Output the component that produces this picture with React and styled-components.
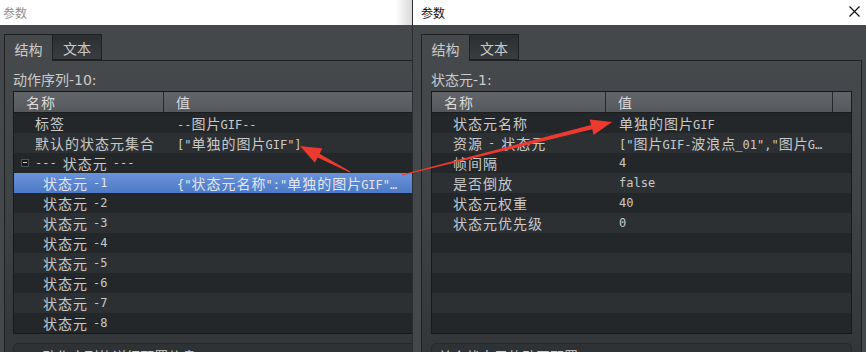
import React from 'react';
import styled, { createGlobalStyle } from 'styled-components';

const GlobalStyle = createGlobalStyle`
  html, body { margin: 0; padding: 0; background: #45484b; }
  body { font-family: "DejaVu Sans Mono", "Noto Sans CJK SC", monospace; }
`;

// CJK runs get their own span so they take the wider advance of the original
const T = ({ children }) =>
    String(children)
        .split(/([\u3400-\u9fff\u3000-\u303f\uff00-\uffef]+)/)
        .map((s, i) => (i % 2 ? <Cjk key={i}>{s}</Cjk> : s));

const leftRows = [
    { name: '标签', value: '--图片GIF--', indent: 21 },
    { name: '默认的状态元集合', value: '["单独的图片GIF"]', indent: 21 },
    { name: '---状态元---', value: '', indent: 7, group: true },
    { name: '状态元-1', value: '{"状态元名称":"单独的图片GIF"…', indent: 29, selected: true },
    { name: '状态元-2', value: '', indent: 29 },
    { name: '状态元-3', value: '', indent: 29 },
    { name: '状态元-4', value: '', indent: 29 },
    { name: '状态元-5', value: '', indent: 29 },
    { name: '状态元-6', value: '', indent: 29 },
    { name: '状态元-7', value: '', indent: 29 },
    { name: '状态元-8', value: '', indent: 29 },
];

const rightRows = [
    { name: '状态元名称', value: '单独的图片GIF', indent: 21 },
    { name: '资源-状态元', value: '["图片GIF-波浪点_01","图片G…', indent: 21 },
    { name: '帧间隔', value: '4', indent: 21 },
    { name: '是否倒放', value: 'false', indent: 21 },
    { name: '状态元权重', value: '40', indent: 21 },
    { name: '状态元优先级', value: '0', indent: 21 },
    {}, {}, {}, {}, {},
];

const arrow = (x1, y1, x2, y2, head = 20, hw = 8) => {
    const len = Math.hypot(x2 - x1, y2 - y1);
    const ux = (x2 - x1) / len;
    const uy = (y2 - y1) / len;
    const nx = -uy;
    const ny = ux;
    const bx = x2 - ux * head;
    const by = y2 - uy * head;
    const p = (x, y) => `${x.toFixed(1)},${y.toFixed(1)}`;
    return [
        p(x1 + nx * 0.6, y1 + ny * 0.6),
        p(bx + nx * 2.2, by + ny * 2.2),
        p(bx + nx * hw, by + ny * hw),
        p(x2, y2),
        p(bx - nx * hw, by - ny * hw),
        p(bx - nx * 2.2, by - ny * 2.2),
        p(x1 - nx * 0.6, y1 - ny * 0.6),
    ].join(' ');
};

const PropTable = ({ nameWidth, corner, rows }) => (
    <Table>
        <HeaderRow $name={nameWidth} $corner={corner}>
            <HeaderCell><T>名称</T></HeaderCell>
            <HeaderCell><T>值</T></HeaderCell>
            {corner && <HeaderCell />}
        </HeaderRow>
        {rows.map((r, i) => (
            <Row key={i} $name={nameWidth} $odd={i % 2 === 1} $selected={r.selected}>
                <NameCell $indent={r.indent || 0}>
                    {r.group && <Expander />}
                    {r.name && <T>{r.name}</T>}
                </NameCell>
                <ValueCell>{r.value && <T>{r.value}</T>}</ValueCell>
            </Row>
        ))}
    </Table>
);

const PanelWindow = ({ width, active, pad, paneWidth, panePad, label, nameWidth, corner, rows, footer }) => (
    <Window $w={width} $active={active}>
        <TitleBar $active={active}>
            <span>参数</span>
            {active && (
                <svg width="11" height="11" viewBox="0 0 11 11">
                    <path d="M0.5 0.5 L10.5 10.5 M10.5 0.5 L0.5 10.5" stroke="#111" strokeWidth="1.2" />
                </svg>
            )}
        </TitleBar>
        <Body $pad={pad}>
            <TabBar>
                <Tab $active>结构</Tab>
                <Tab>文本</Tab>
            </TabBar>
            <Pane $w={paneWidth} $pad={panePad}>
                <Label>{label}</Label>
                <PropTable nameWidth={nameWidth} corner={corner} rows={rows} />
                <Footer>{footer}</Footer>
            </Pane>
        </Body>
    </Window>
);

const App = () => (
    <Page>
        <GlobalStyle />
        <PanelWindow
            width={412}
            pad={4}
            paneWidth={470}
            panePad={8}
            label="动作序列-10:"
            nameWidth={150}
            rows={leftRows}
            footer="???动作序列的详细配置信息"
        />
        <PanelWindow
            width={454}
            active
            pad={8}
            paneWidth={441}
            panePad={9}
            label="状态元-1:"
            nameWidth={174}
            corner
            rows={rightRows}
            footer="单个状态元的动画配置"
        />
        <Overlay width="866" height="352" viewBox="0 0 866 352">
            <polygon points={arrow(350, 172, 300, 146, 21, 8)} fill="#ee3a2e" />
            <polygon points={arrow(402, 175, 612, 122, 21, 8)} fill="#ee3a2e" />
        </Overlay>
    </Page>
);

export default App;

const Page = styled.div`
position: relative;
display: flex;
width: 866px;
height: 352px;
overflow: hidden;
background: #45484b;
`;
const Overlay = styled.svg`
position: absolute;
left: 0;
top: 0;
pointer-events: none;
`;
const Window = styled.section`
flex: none;
display: flex;
flex-direction: column;
width: ${(p) => p.$w}px;
height: 352px;
overflow: hidden;
box-sizing: border-box;
border-left: ${(p) => (p.$active ? '1px solid #2b2e30' : 'none')};
`;
const TitleBar = styled.div`
flex: none;
height: 25px;
display: flex;
align-items: center;
justify-content: space-between;
padding: 0 ${(p) => (p.$active ? '6px 0 8px' : '0 0 3px')};
box-sizing: border-box;
background: ${(p) => (p.$active ? '#fff' : 'linear-gradient(to right, #fff 0, #fff calc(100% - 16px), #d8d8d8 100%)')};
color: ${(p) => (p.$active ? '#111' : '#8e8e8e')};
font-family: "Noto Sans CJK SC", sans-serif;
font-size: 12px;
svg { margin-top: -2px; }
`;
const Body = styled.div`
flex: 1;
display: flex;
flex-direction: column;
padding: 9px 0 0 ${(p) => p.$pad}px;
background: #45484b;
overflow: hidden;
`;
const TabBar = styled.div`
display: flex;
height: 26px;
position: relative;
z-index: 1;
`;
const Tab = styled.div`
width: 47px;
height: ${(p) => (p.$active ? 27 : 26)}px;
box-sizing: border-box;
display: flex;
align-items: center;
justify-content: center;
padding-top: 1px;
border: 1px solid #1e2022;
border-bottom: ${(p) => (p.$active ? 'none' : '1px solid #1e2022')};
margin-left: ${(p) => (p.$active ? 0 : -1)}px;
background: ${(p) => (p.$active ? '#46494c' : 'linear-gradient(#2c2f32, #3a3d40)')};
color: #cbcbcb;
font-family: "Noto Sans CJK SC", sans-serif;
font-size: 14px;
&:first-child { width: 49px; }
&:last-child { width: 50px; }
`;
const Pane = styled.div`
flex: 1;
width: ${(p) => p.$w}px;
box-sizing: border-box;
border: 1px solid #1e2022;
border-bottom: none;
padding: 0 ${(p) => p.$pad}px;
background: linear-gradient(#46494c 0, #404346 140px, #35383b 270px, #313437 100%);
`;
const Label = styled.div`
margin-top: 9px;
height: 21px;
line-height: 21px;
color: #cbcbcb;
font-family: "DejaVu Sans", "Noto Sans CJK SC", sans-serif;
font-size: 14px;
`;
const Table = styled.div`
border: 1px solid #18191b;
background: #232628;
`;
const columns = (p) => `${p.$name}px 1fr${p.$corner ? ' 18px' : ''}`;
const HeaderRow = styled.div`
display: grid;
grid-template-columns: ${columns};
height: 20px;
border-bottom: 1px solid #1a1c1e;
background: linear-gradient(#62656a, #56595c);
`;
const HeaderCell = styled.div`
display: flex;
align-items: center;
padding-left: 12px;
border-right: 1px solid #26282a;
color: #dadada;
font-size: 12px;
&:last-child { border-right: none; }
`;
const Row = styled.div`
display: grid;
grid-template-columns: ${columns};
height: 20px;
align-items: center;
white-space: nowrap;
font-size: 12px;
color: ${(p) => (p.$selected ? '#e2e6ee' : '#c9c9c9')};
background: ${(p) =>
    p.$selected ? 'linear-gradient(#6a93da, #4d79c6)' : p.$odd ? '#2d3033' : '#24272a'};
`;
const NameCell = styled.div`
display: flex;
align-items: center;
gap: 6px;
padding-left: ${(p) => p.$indent}px;
overflow: hidden;
`;
const ValueCell = styled.div`
padding-left: 13px;
overflow: hidden;
`;
const Cjk = styled.span`
font-family: "Noto Sans CJK SC", sans-serif;
font-size: 14px;
letter-spacing: 1px;
margin-right: -1px;
`;
const Expander = styled.span`
position: relative;
width: 8px;
height: 8px;
box-sizing: border-box;
border: 1px solid #4f5255;
background: #17191b;
&::after {
  content: '';
  position: absolute;
  left: 1px;
  top: 2px;
  width: 4px;
  height: 1px;
  background: #cfcfcf;
}
`;
const Footer = styled.div`
margin-top: 9px;
height: 40px;
box-sizing: border-box;
padding: 5px 0 0 6px;
border: 1px solid #26292b;
border-radius: 5px 5px 0 0;
background: #2f3235;
color: #c9c9c9;
font-family: "DejaVu Sans", "Noto Sans CJK SC", sans-serif;
font-size: 14px;
line-height: 16px;
`;
